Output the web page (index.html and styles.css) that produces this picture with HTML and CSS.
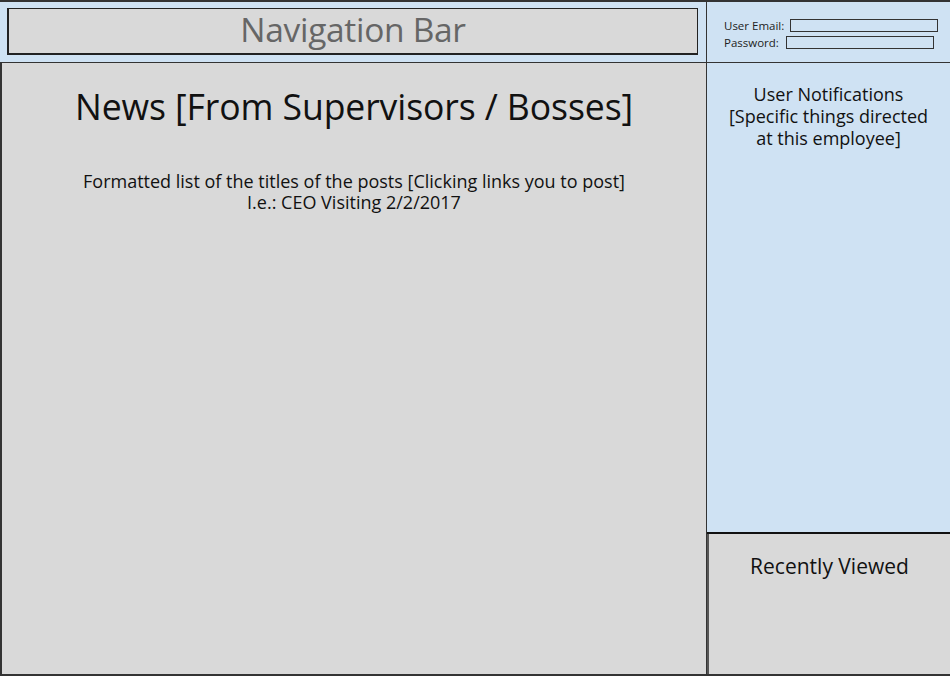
FILE: index.html
```html
<!DOCTYPE html>
<html>
<head>
<meta charset="utf-8">
<link rel="stylesheet" href="styles.css">
</head>
<body>
<div class="page">
  <header class="topbar">
    <div class="nav">Navigation Bar</div>
  </header>
  <div class="login">
    <div class="field"><span class="label">User Email:</span><span class="input email"></span></div>
    <div class="field"><span class="label">Password:</span><span class="input pass"></span></div>
  </div>
  <main class="news">
    <h1>News [From Supervisors / Bosses]</h1>
    <p class="line first">Formatted list of the titles of the posts [Clicking links you to post]</p>
    <p class="line">I.e.: CEO Visiting 2/2/2017</p>
  </main>
  <aside class="side">
    <section class="notif">User Notifications<br>[Specific things directed<br>at this employee]</section>
    <section class="recent">Recently Viewed</section>
  </aside>
</div>
</body>
</html>
```
FILE: styles.css
```css
html, body {
  margin: 0;
  padding: 0;
  width: 950px;
  height: 676px;
  overflow: hidden;
  background: #d9d9d9;
  font-family: "Open Sans", "Noto Sans", sans-serif;
}
.page {
  display: grid;
  grid-template-columns: 706px 244px;
  grid-template-rows: 63px 611px;
  width: 950px;
  height: 674px;
  border-bottom: 2px solid #333;
}
.topbar {
  background: #cfe2f3;
  border-top: 2px solid #333;
  border-bottom: 1px solid #333;
  padding: 6px 7px 7px 7px;
  box-sizing: border-box;
}
.nav {
  height: 47px;
  box-sizing: border-box;
  border: 1px solid #222;
  border-left-width: 2px;
  border-bottom-width: 2px;
  background: #d9d9d9;
  margin-right: 1px;
  padding-bottom: 4px;
  display: flex;
  align-items: center;
  justify-content: center;
  color: #666;
  font-size: 33.5px;
  letter-spacing: -0.3px;
}
.login {
  background: #cfe2f3;
  border-top: 2px solid #333;
  border-bottom: 1px solid #333;
  border-left: 1px solid #333;
  box-sizing: border-box;
  padding: 16px 0 0 17px;
  display: flex;
  flex-direction: column;
  gap: 3px;
  font-size: 11.5px;
  color: #222;
}
.field {
  display: flex;
  align-items: center;
  height: 14px;
}
.label { margin-right: 6px; }
.input {
  display: block;
  height: 13px;
  box-sizing: border-box;
  border: 1px solid #333;
  background: #cfe2f3;
}
.email { width: 148px; }
.pass { width: 148px; margin-left: 1px; }
.news {
  border-left: 2px solid #333;
  text-align: center;
  color: #111;
}
.news h1 {
  margin: 21px 0 0 0;
  font-weight: normal;
  font-size: 35.6px;
  line-height: 44px;
  letter-spacing: -0.1px;
}
.line {
  margin: 0;
  font-size: 18px;
  line-height: 21px;
  height: 21px;
}
.line.first { margin-top: 43px; }
.side {
  display: flex;
  flex-direction: column;
  border-left: 1px solid #333;
}
.notif {
  background: #cfe2f3;
  height: 471px;
  border-bottom: 2px solid #111;
  text-align: center;
  font-size: 18px;
  line-height: 22px;
  padding-top: 20px;
  box-sizing: border-box;
  color: #111;
}
.recent {
  flex: 1;
  border-left: 2px solid #555;
  text-align: center;
  font-size: 21px;
  padding-top: 18px;
  color: #111;
}
```
